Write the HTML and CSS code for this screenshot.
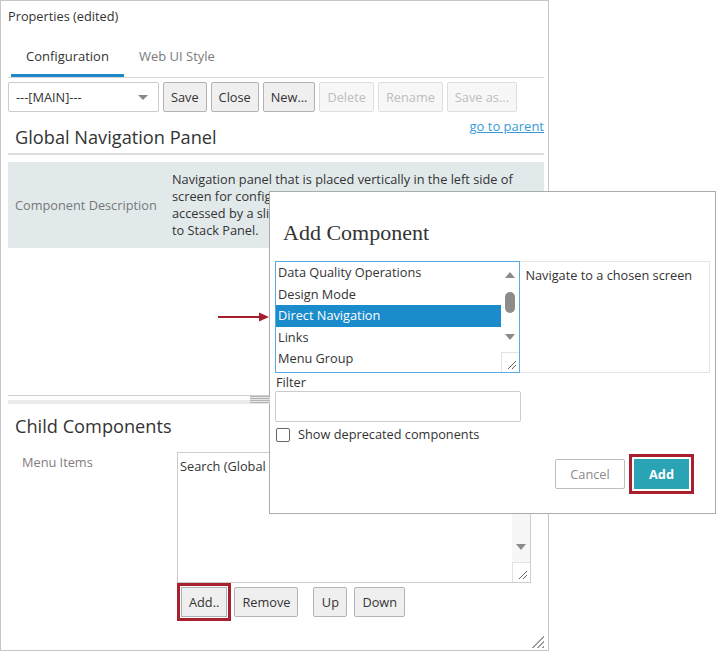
FILE: index.html
```html
<!DOCTYPE html>
<html>
  <head>
    <meta charset="UTF-8" />
    <title>Properties</title>
    <link rel="stylesheet" href="styles.css">
  </head>
  <body>
    <div class="panel">
      <div class="panel-title">Properties (edited)</div>
      <div class="tabs">
        <div class="tab active">Configuration</div>
        <div class="tab">Web UI Style</div>
      </div>
      <div class="toolbar">
        <div class="select">---[MAIN]---<span class="caret"></span></div>
        <button class="btn">Save</button>
        <button class="btn">Close</button>
        <button class="btn">New...</button>
        <button class="btn" disabled>Delete</button>
        <button class="btn" disabled>Rename</button>
        <button class="btn" disabled>Save as...</button>
      </div>
      <div class="heading-row">
        <h2 class="heading">Global Navigation Panel</h2>
        <a href="#" class="parent-link">go to parent</a>
      </div>
      <div class="desc-row">
        <div class="desc-label">Component Description</div>
        <div class="desc-text">
          Navigation panel that is placed vertically in the left side of<br>
          screen for configuration. Child components can be<br>
          accessed by a slide-out menu. It is similar<br>
          to Stack Panel.
        </div>
      </div>
      <div class="splitter"><span class="grip"></span></div>
      <h2 class="heading child-heading">Child Components</h2>
      <div class="items-row">
        <div class="items-label">Menu Items</div>
        <div class="items-col">
          <div class="listbox">
            <div class="list-content">Search (Global Search)</div>
            <div class="scroll">
              <span class="arrow-up"></span>
              <span class="arrow-down"></span>
              <span class="resize"></span>
            </div>
          </div>
          <div class="item-buttons">
            <button class="btn marked">Add..</button>
            <button class="btn">Remove</button>
            <button class="btn gap-left">Up</button>
            <button class="btn">Down</button>
          </div>
        </div>
      </div>
      <span class="corner-grip"></span>
    </div>

    <svg class="pointer" width="56" height="10" viewBox="0 0 56 10">
      <line x1="0" y1="5" x2="44" y2="5" stroke="#a31f2b" stroke-width="2.2" />
      <polygon points="41,0.5 51,5 41,9.5" fill="#a31f2b" />
    </svg>

    <div class="dialog">
      <div class="dialog-title">Add Component</div>
      <div class="picker">
        <div class="picker-list">
          <div class="options">
            <div class="option">Data Quality Operations</div>
            <div class="option">Design Mode</div>
            <div class="option selected">Direct Navigation</div>
            <div class="option">Links</div>
            <div class="option">Menu Group</div>
          </div>
          <div class="scroll">
            <span class="arrow-up"></span>
            <span class="thumb"></span>
            <span class="arrow-down"></span>
            <span class="resize"></span>
          </div>
        </div>
        <div class="picker-desc">Navigate to a chosen screen</div>
      </div>
      <div class="filter-label">Filter</div>
      <div class="filter-input"></div>
      <label class="check-row"><span class="checkbox"></span>Show deprecated components</label>
      <div class="dialog-buttons">
        <button class="btn cancel">Cancel</button>
        <button class="btn primary marked-wide">Add</button>
      </div>
    </div>
  </body>
</html>
```

FILE: styles.css
```css
body {
  margin: 0;
  font-family: 'Open Sans', 'Noto Sans', sans-serif;
  font-size: 12.75px;
  color: #333333;
  background-color: #ffffff;
  width: 718px;
  height: 651px;
  position: relative;
  overflow: hidden;
}
.panel {
  box-sizing: border-box;
  width: 549px;
  height: 651px;
  border: 1px solid #c6c6c6;
  padding: 0 4px 0 7px;
  position: relative;
}
.panel-title {
  padding-top: 7px;
  line-height: 17px;
}
.tabs {
  display: flex;
  margin-top: 15px;
  border-bottom: 1px solid #d6d6d6;
  padding-left: 3px;
}
.tab {
  box-sizing: border-box;
  height: 37px;
  line-height: 32px;
  padding: 0 15px;
  color: #7a7a7a;
  font-size: 13px;
}
.tab.active {
  color: #333333;
  border-bottom: 3px solid #1f88c9;
}
.toolbar {
  display: flex;
  gap: 4px;
  margin-top: 4px;
  height: 30px;
}
.select {
  box-sizing: border-box;
  width: 151px;
  height: 30px;
  border: 1px solid #cccccc;
  border-radius: 2px;
  padding-left: 7px;
  line-height: 28px;
  position: relative;
}
.caret {
  position: absolute;
  right: 10px;
  top: 12px;
  border-left: 5px solid transparent;
  border-right: 5px solid transparent;
  border-top: 5px solid #888888;
}
.btn {
  box-sizing: border-box;
  height: 30px;
  padding: 0 7px;
  font-family: inherit;
  font-size: 12.75px;
  color: #333333;
  background-color: #efefef;
  border: 1px solid #b3b3b3;
  border-radius: 2px;
}
.btn:disabled {
  color: #bdbdbd;
  background-color: #f7f7f7;
  border-color: #dedede;
}
.heading-row {
  display: flex;
  justify-content: space-between;
  align-items: flex-start;
  border-bottom: 2px solid #dddddd;
  padding-bottom: 4px;
}
.heading {
  margin: 13px 0 0 7px;
  font-size: 18.2px;
  font-weight: normal;
  line-height: 24px;
  color: #333333;
}
.parent-link {
  margin-top: 6px;
  line-height: 17px;
  color: #3a9ad9;
  font-size: 13px;
}
.desc-row {
  display: grid;
  grid-template-columns: 164px 1fr;
  margin-top: 7px;
  background-color: #e1e9eb;
  height: 86px;
  align-items: center;
}
.desc-label {
  padding-left: 7px;
  color: #777777;
}
.desc-text {
  line-height: 17px;
  white-space: nowrap;
  align-self: start;
  padding-top: 9px;
}
.splitter {
  margin-top: 147px;
  height: 9px;
  border-top: 1px solid #cfcfcf;
  position: relative;
}
.splitter::after {
  content: "";
  position: absolute;
  left: 0;
  right: 0;
  top: 4px;
  height: 4px;
  background-color: #ebebeb;
}
.grip {
  position: absolute;
  left: 242px;
  top: 0;
  width: 20px;
  height: 8px;
  z-index: 1;
  background: repeating-linear-gradient(#b5b5b5 0 1px, #e6e6e6 1px 2px);
}
.child-heading {
  margin-top: 9px;
}
.items-row {
  display: flex;
  margin-top: 14px;
}
.items-label {
  width: 155px;
  padding: 2px 0 0 14px;
  line-height: 17px;
  color: #837a7e;
}
.listbox {
  box-sizing: border-box;
  width: 354px;
  height: 131px;
  border: 1px solid #cccccc;
  display: flex;
}
.list-content {
  flex: 1;
  padding: 3px 2px;
  line-height: 20px;
}
.scroll {
  width: 18px;
  background-color: #f7f7f7;
  position: relative;
}
.arrow-up, .arrow-down {
  position: absolute;
  left: 4px;
  border-left: 5px solid transparent;
  border-right: 5px solid transparent;
}
.arrow-up {
  top: 12px;
  border-bottom: 6px solid #8a8a8a;
}
.arrow-down {
  bottom: 32px;
  border-top: 6px solid #8a8a8a;
}
.resize {
  position: absolute;
  left: 0;
  right: 0;
  bottom: 0;
  height: 19px;
  border-top: 1px solid #e2e2e2;
  border-left: 1px solid #e2e2e2;
  background-color: #ffffff;
}
.resize::after {
  content: "";
  position: absolute;
  right: 3px;
  bottom: 3px;
  width: 8px;
  height: 8px;
  background: linear-gradient(135deg, transparent 45%, #666666 45% 55%, transparent 55% 70%, #666666 70% 80%, transparent 80%);
}
.item-buttons {
  display: flex;
  gap: 7px;
  margin: 4px 0 0 4px;
}
.item-buttons .btn {
  min-width: 34px;
}
.gap-left {
  margin-left: 8px;
}
.marked {
  border-radius: 0;
  outline: 3px solid #a81f2e;
  outline-offset: 1px;
}
.corner-grip {
  position: absolute;
  right: 4px;
  bottom: 2px;
  width: 12px;
  height: 12px;
  background: linear-gradient(135deg, transparent 50%, #9a9a9a 50% 58%, transparent 58% 70%, #9a9a9a 70% 78%, transparent 78% 88%, #9a9a9a 88%);
}
.pointer {
  position: absolute;
  left: 218px;
  top: 312px;
}
.dialog {
  position: absolute;
  left: 269px;
  top: 191px;
  box-sizing: border-box;
  width: 447px;
  height: 323px;
  border: 1px solid #ababab;
  background-color: #ffffff;
  padding: 0 5px;
}
.dialog-title {
  padding: 27px 0 0 8px;
  font-family: 'Liberation Serif', 'DejaVu Serif', serif;
  font-size: 22px;
  line-height: 28px;
  color: #333333;
}
.picker {
  display: flex;
  margin-top: 14px;
  height: 112px;
}
.picker-list {
  box-sizing: border-box;
  width: 246px;
  border: 1px solid #5aaadf;
  display: flex;
}
.options {
  flex: 1;
}
.option {
  height: 21.5px;
  line-height: 21.5px;
  padding-left: 2px;
}
.option.selected {
  background-color: #1a8bcb;
  color: #ffffff;
}
.picker-list .scroll {
  background-color: #ffffff;
}
.picker-list .arrow-up {
  top: 10px;
}
.picker-list .arrow-down {
  bottom: 32px;
}
.thumb {
  position: absolute;
  left: 4px;
  top: 30px;
  width: 10px;
  height: 21px;
  border-radius: 5px;
  background-color: #8c8c8c;
}
.picker-desc {
  box-sizing: border-box;
  width: 190px;
  border: 1px solid #e4e4e4;
  border-left: none;
  padding: 5px 5px;
  line-height: 17px;
}
.filter-label {
  padding: 1px 0 0 1px;
  line-height: 17px;
}
.filter-input {
  box-sizing: border-box;
  width: 246px;
  height: 31px;
  border: 1px solid #cccccc;
  border-radius: 2px;
}
.check-row {
  display: flex;
  align-items: center;
  margin-top: 5px;
  padding-left: 1px;
  line-height: 15px;
}
.checkbox {
  box-sizing: border-box;
  width: 14px;
  height: 14px;
  border: 1px solid #666666;
  border-radius: 2px;
  margin-right: 8px;
}
.dialog-buttons {
  display: flex;
  justify-content: flex-end;
  gap: 9px;
  margin-top: 17px;
  padding-right: 21px;
}
.cancel {
  width: 70px;
  background-color: #ffffff;
  color: #8a8a8a;
  border-color: #bdbdbd;
}
.primary {
  width: 55px;
  background-color: #2aa3b4;
  border-color: #2aa3b4;
  color: #ffffff;
  font-weight: bold;
}
.marked-wide {
  border-radius: 0;
  outline: 3px solid #a81f2e;
  outline-offset: 2px;
}
```
